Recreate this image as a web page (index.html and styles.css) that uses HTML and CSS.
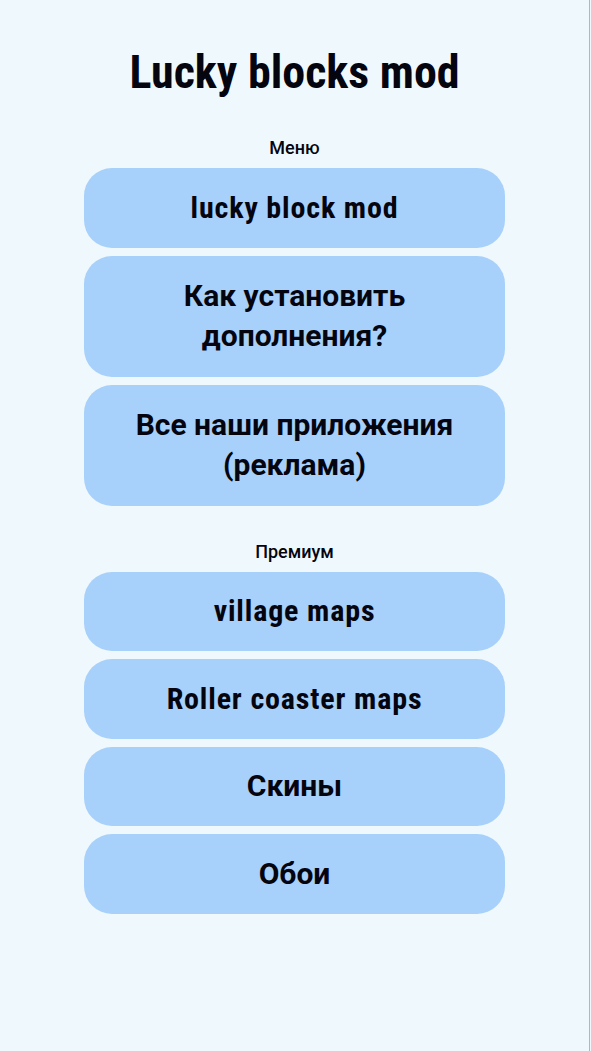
FILE: index.html
```html
<!DOCTYPE html>
<html lang="ru">
<head>
<meta charset="utf-8">
<title>Lucky blocks mod</title>
<link rel="stylesheet" href="styles.css">
</head>
<body>
<main class="page">
  <h1 class="title">Lucky blocks mod</h1>
  <section class="group">
    <div class="label">Меню</div>
    <a class="btn lat">lucky block mod</a>
    <a class="btn two">Как установить<br>дополнения?</a>
    <a class="btn two">Все наши приложения<br>(реклама)</a>
  </section>
  <section class="group premium">
    <div class="label">Премиум</div>
    <a class="btn lat">village maps</a>
    <a class="btn lat">Roller coaster maps</a>
    <a class="btn">Скины</a>
    <a class="btn">Обои</a>
  </section>
</main>
</body>
</html>
```
FILE: styles.css
```css
html, body {
  margin: 0;
  padding: 0;
  background: #eff9fd;
}
body {
  font-family: Roboto, "Noto Sans", sans-serif;
  color: #05050f;
}
.page {
  width: 590px;
  min-height: 1051px;
  box-sizing: border-box;
  border-right: 1px solid #aab9c1;
  padding-top: 45px;
  display: flex;
  flex-direction: column;
  align-items: center;
}
.title {
  margin: 0;
  font-size: 46px;
  line-height: 54px;
  font-weight: 700;
  font-stretch: 82%;
}
.lat {
  font-stretch: 87.5%;
  letter-spacing: 0.85px;
}
.group {
  width: 421px;
  display: flex;
  flex-direction: column;
  gap: 8px;
  margin-top: 39px;
}
.premium {
  margin-top: 36px;
}
.label {
  text-align: center;
  font-size: 18px;
  line-height: 20px;
  font-weight: 500;
  margin-bottom: 2px;
}
.btn {
  display: block;
  background: #a7d0fa;
  border-radius: 28px;
  text-align: center;
  font-size: 30px;
  line-height: 40px;
  font-weight: 700;
  padding: 19.75px 12px;
}
.btn.two {
  padding: 20.5px 12px;
}
```
